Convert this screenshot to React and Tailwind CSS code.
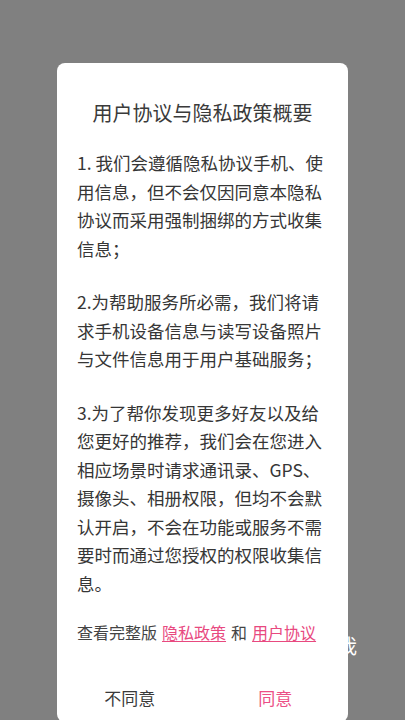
const FONT = { fontFamily: '"Noto Sans CJK SC", "Noto Sans", sans-serif' };

const paragraphs = [
  "1. 我们会遵循隐私协议手机、使用信息，但不会仅因同意本隐私协议而采用强制捆绑的方式收集信息；",
  "2.为帮助服务所必需，我们将请求手机设备信息与读写设备照片与文件信息用于用户基础服务；",
  "3.为了帮你发现更多好友以及给您更好的推荐，我们会在您进入相应场景时请求通讯录、GPS、摄像头、相册权限，但均不会默认开启，不会在功能或服务不需要时而通过您授权的权限收集信息。",
];

export default function App() {
  return (
    <div className="relative h-[720px] w-[405px] overflow-hidden bg-[#808080]" style={FONT}>
      {/* page text showing behind the dialog */}
      <span className="absolute left-[337px] top-[632px] text-[20px] leading-[28px] text-white">我</span>

      <div className="relative z-10 mx-[57px] mt-[63px] rounded-[8px] bg-white px-5 pt-[36px]">
        <h1 className="text-center text-[20px] leading-[28px] text-[#3a3a3a]">
          用户协议与隐私政策概要
        </h1>

        <div className="mt-[22px] flex flex-col gap-[25px]">
          {paragraphs.map((p) => (
            <p key={p} className="text-[17.5px] leading-[28.5px] text-[#363636]">
              {p}
            </p>
          ))}
        </div>

        <p className="mt-[22px] flex text-[16px] leading-[24px] text-[#444]">
          <span>查看完整版</span>
          <span className="ml-[5px] text-[#e8497f] underline underline-offset-2">隐私政策</span>
          <span className="mx-[5px]">和</span>
          <span className="text-[#e8497f] underline underline-offset-2">用户协议</span>
        </p>

        <div className="mt-[30px] -mx-5 grid grid-cols-2">
          <button className="h-[48px] text-[17px] text-[#3a3a3a]">不同意</button>
          <button className="h-[48px] text-[17px] text-[#ec4f86]">同意</button>
        </div>
      </div>
    </div>
  );
}
